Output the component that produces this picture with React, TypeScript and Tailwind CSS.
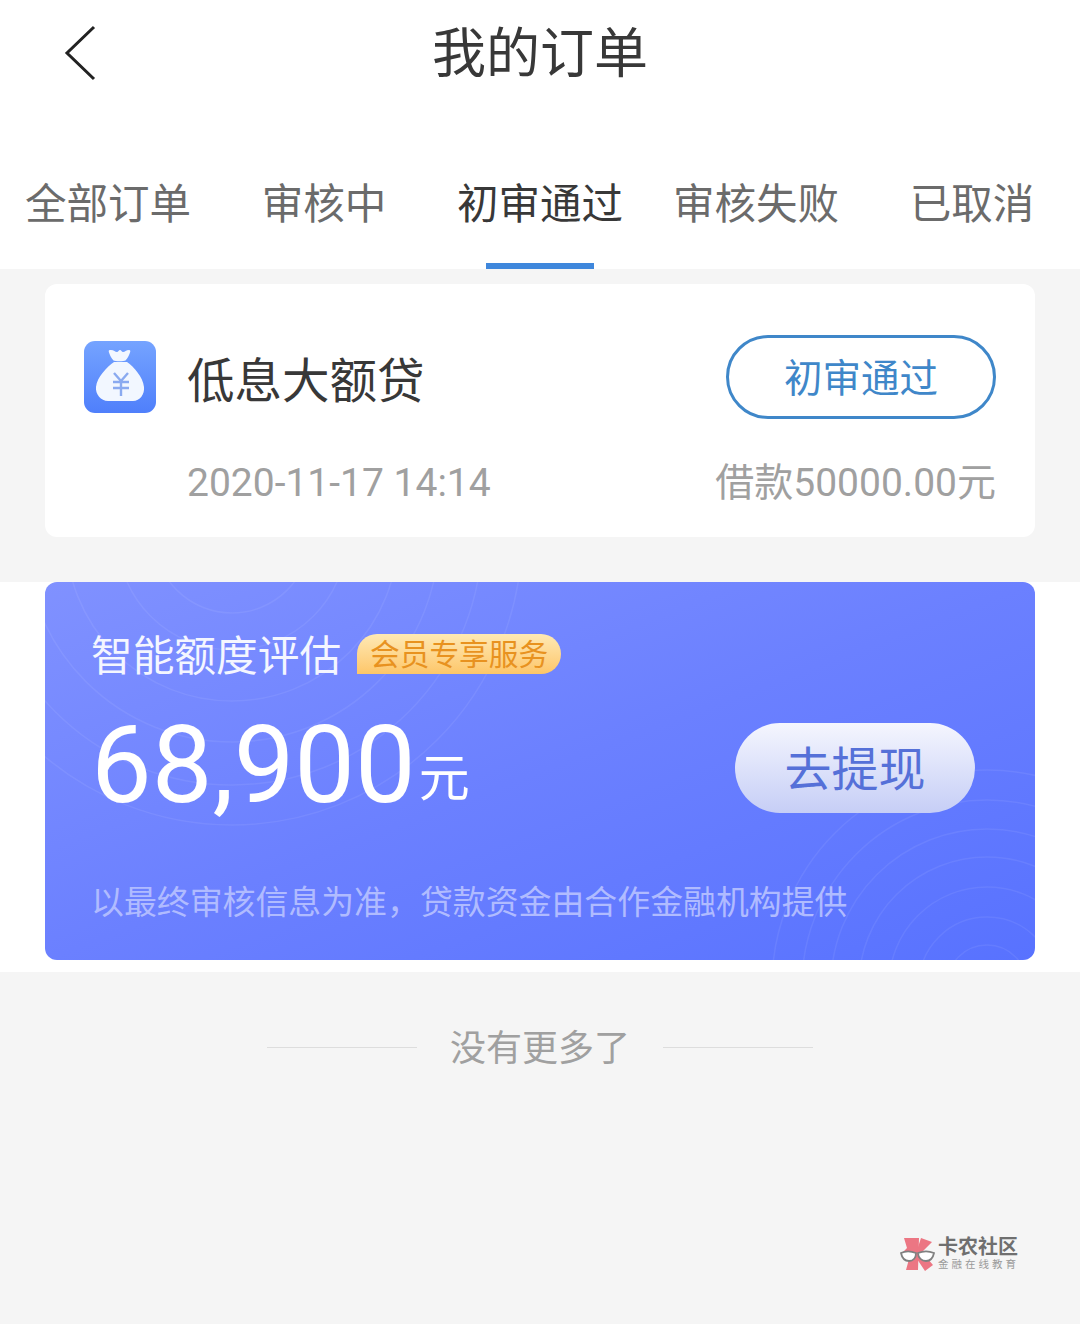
const tabs = ["全部订单", "审核中", "初审通过", "审核失败", "已取消"];
const font = "font-['Roboto','Noto_Sans_CJK_SC',sans-serif]";

const BagIcon = () => (
  <svg width="72" height="72" viewBox="0 0 72 72">
    <defs>
      <linearGradient id="bag" x1="0" y1="0" x2="0" y2="1">
        <stop offset="0" stopColor="#75a3ff" />
        <stop offset="1" stopColor="#4f7ffb" />
      </linearGradient>
    </defs>
    <rect width="72" height="72" rx="11" fill="url(#bag)" />
    <path d="M27 9c3 0 4 2 6 2 1.200 0 1.800-2 3-2s1.800 2 3 2c2 0 3-2 6-2 1.500 0 1.500 1 1 2.500-.8 2.500-2.500 6-4.500 8-1.500 1-10.500 1-12 0-2-2-3.700-5.500-4.500-8-.5-1.500-.5-2.500 1-2.500z" fill="#f2f7ff" />
    <path d="M30 21h13c7 5 16 15 17 25 .8 7-4 14-11 14H24c-7 0-12.800-7-12-14 1-10 11-20 18-25z" fill="#f2f7ff" />
    <path d="M30 32l7 8 7-8M29 41h16M29 47h16M37 40v15" fill="none" stroke="#8aaaf0" strokeWidth="2.400" />
  </svg>
);

const Rings = () => (
  <svg className="absolute inset-0" width="990" height="378" viewBox="0 0 990 378" fill="none" stroke="#ffffff" strokeOpacity="0.07" strokeWidth="1.500">
    {[78, 115, 166, 207, 250, 290].map((r) => (
      <circle key={r} cx="187" cy="-47" r={r} />
    ))}
    {[40, 68, 98, 128, 156, 185, 215].map((r) => (
      <circle key={r} cx="942" cy="403" r={r} />
    ))}
  </svg>
);

const Logo = () => (
  <svg width="36" height="36" viewBox="0 0 36 36">
    <path d="M4 2h15l-1 32H6l3-11-8-5 6-6z" fill="#ec7683" />
    <path d="M21 2l11 4-10 10 11 13-8 6-10-15z" fill="#ec7683" />
    <path d="M1 17c4-2 10-2 15 0 0 5-3 8-7 8s-7-3-8-8zM18 17c5-2 11-2 16 0-1 5-4 8-8 8s-8-3-8-8z" fill="#ffffff" stroke="#808080" strokeWidth="1.800" />
  </svg>
);

export default function App() {
  return (
    <div className={`${font} relative min-h-[1324px] w-[1080px] overflow-hidden bg-[#f5f5f5]`}>
      {/* header */}
      <header className="h-[269px] bg-white">
        <div className="grid h-[106px] grid-cols-[1fr_auto_1fr] items-center">
          <div className="pl-[64px]">
            <svg width="32" height="56" viewBox="0 0 32 56" fill="none" stroke="#222222" strokeWidth="3">
              <path d="M30 2L3 28l27 26" />
            </svg>
          </div>
          <h1 className="pt-[3px] text-[54px] leading-[70px] font-normal text-[#383838]">我的订单</h1>
          <div />
        </div>
        <nav className="grid h-[163px] grid-cols-5">
          {tabs.map((tab, i) => (
            <div key={tab} className="flex flex-col items-center">
              <span className={`mt-[66px] text-[41.500px] leading-[66px] ${i === 2 ? "text-[#383838]" : "text-[#6b6b6b]"}`}>{tab}</span>
              {i === 2 && <div className="mt-auto h-[6px] w-[108px] bg-[#3f87dc]" />}
            </div>
          ))}
        </nav>
      </header>

      {/* order card */}
      <section className="px-[45px] pt-[15px] pb-[45px]">
        <div className="h-[253px] rounded-xl bg-white px-[39px] pt-[51px]">
          <div className="flex h-[84px] items-center">
            <BagIcon />
            <span className="ml-[31px] pt-[9px] text-[47.500px] leading-[60px] text-[#383838]">低息大额贷</span>
            <span className="ml-auto flex h-[84px] w-[270px] items-center justify-center rounded-full border-[3px] border-[#3f87c9] pt-[3px] text-[38.500px] text-[#3f87c9]">初审通过</span>
          </div>
          <div className="mt-[39px] flex h-[50px] items-center justify-between pl-[103px] text-[39px] leading-[50px] text-[#a0a0a0]">
            <span>2020-11-17 14:14</span>
            <span>借款50000.00元</span>
          </div>
        </div>
      </section>

      {/* credit card */}
      <section className="bg-white px-[45px] pb-[12px]">
        <div className="relative h-[378px] overflow-hidden rounded-xl bg-gradient-to-br from-[#8091ff] via-[#6b80ff] to-[#5872ff]">
          <Rings />
          <div className="relative pt-[52px]">
            <div className="flex h-[40px] items-center pl-[46px]">
              <span className="pt-[5px] text-[41.700px] leading-[50px] text-[#f4f6ff]">智能额度评估</span>
              <span className="ml-[16px] flex h-[40px] w-[204px] items-center justify-center rounded-[20px] rounded-bl-none bg-gradient-to-b from-[#fee9b4] to-[#fdc668] pt-[2px] text-[29.700px] leading-[40px] text-[#e8921f]">会员专享服务</span>
            </div>
            <div className="mt-[49px] flex h-[90px] items-center justify-between pr-[60px] pl-[46px]">
              <div className="flex items-start pb-[6px]">
                <span className="text-[108px] leading-[89px] text-white">68,900</span>
                <span className="mt-[28px] ml-[3px] text-[51px] leading-[60px] text-white">元</span>
              </div>
              <button className="h-[90px] w-[240px] rounded-full bg-gradient-to-b from-[#f5f6fe] to-[#c6cef6] pt-[3px] text-[47px] leading-[60px] text-[#5570d8]">去提现</button>
            </div>
            <p className="mt-[68px] pl-[46px] text-[32.900px] leading-[44px] text-[#b0bbff]">以最终审核信息为准，贷款资金由合作金融机构提供</p>
          </div>
        </div>
      </section>

      {/* end of list */}
      <div className="mt-[50px] flex h-[50px] items-center justify-center gap-[33px]">
        <div className="h-px w-[150px] bg-[#dddddd]" />
        <span className="pt-[3px] text-[36px] leading-[50px] text-[#a0a0a0]">没有更多了</span>
        <div className="h-px w-[150px] bg-[#dddddd]" />
      </div>

      {/* watermark */}
      <div className="absolute top-[1236px] left-[900px] flex items-center gap-[2px]">
        <Logo />
        <div className="flex flex-col">
          <span className="text-[20px] leading-[22px] font-bold text-[#6f6f6f]">卡农社区</span>
          <span className="text-[10.500px] leading-[14px] tracking-[3px] whitespace-nowrap text-[#9a9a9a]">金融在线教育</span>
        </div>
      </div>
    </div>
  );
}
